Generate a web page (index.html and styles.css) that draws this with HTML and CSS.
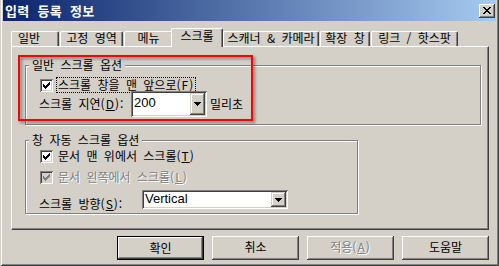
FILE: index.html
```html
<!DOCTYPE html>
<html lang="ko">
<head>
<meta charset="utf-8">
<title>입력 등록 정보</title>
<link rel="stylesheet" href="styles.css">
</head>
<body>
<div class="window">
  <div class="titlebar">
    <span class="title">입력 등록 정보</span>
    <div class="close">
      <svg width="8" height="7" viewBox="0 0 8 7" shape-rendering="crispEdges"><path fill="#000" d="M0 0h2v1h-2zM6 0h2v1h-2zM1 1h2v1h-2zM5 1h2v1h-2zM2 2h4v1h-4zM3 3h2v1h-2zM2 4h4v1h-4zM1 5h2v1h-2zM5 5h2v1h-2zM0 6h2v1h-2zM6 6h2v1h-2z"/></svg>
    </div>
  </div>
  <div class="client">
    <div class="tabs">
      <div class="tab t1">일반</div>
      <div class="tab t2">고정 영역</div>
      <div class="tab t3">메뉴</div>
      <div class="tab t4 selected">스크롤</div>
      <div class="tab t5">스캐너 &amp; 카메라</div>
      <div class="tab t6">확장 창</div>
      <div class="tab t7">링크 / 핫스팟</div>
    </div>
    <div class="panel">
      <div class="group g1">
        <div class="legend">일반 스크롤 옵션</div>
        <div class="row check-row r1">
          <span class="checkbox"><svg width="7" height="7" viewBox="0 0 7 7" shape-rendering="crispEdges"><path fill="#000" d="M6 0h1v1h-1zM5 1h2v1h-2zM0 2h1v1h-1zM4 2h3v1h-3zM0 3h2v1h-2zM3 3h3v1h-3zM0 4h5v1h-5zM1 5h3v1h-3zM2 6h1v1h-1z"/></svg></span>
          <span class="label focus">스크롤 창을 맨 앞으로<span class="acc">(<u>F</u>)</span></span>
        </div>
        <div class="row field-row r2">
          <span class="field-label fl1">스크롤 지연<span class="acc">(<u>D</u>):</span></span>
          <div class="combo c1"><span class="value">200</span><span class="drop"><svg width="7" height="4" viewBox="0 0 7 4" shape-rendering="crispEdges"><path fill="#000" d="M0 0h7v1h-7zM1 1h5v1h-5zM2 2h3v1h-3zM3 3h1v1h-1z"/></svg></span></div>
          <span class="unit">밀리초</span>
        </div>
      </div>
      <div class="group g2">
        <div class="legend">창 자동 스크롤 옵션</div>
        <div class="row check-row r3">
          <span class="checkbox"><svg width="7" height="7" viewBox="0 0 7 7" shape-rendering="crispEdges"><path fill="#000" d="M6 0h1v1h-1zM5 1h2v1h-2zM0 2h1v1h-1zM4 2h3v1h-3zM0 3h2v1h-2zM3 3h3v1h-3zM0 4h5v1h-5zM1 5h3v1h-3zM2 6h1v1h-1z"/></svg></span>
          <span class="label">문서 맨 위에서 스크롤<span class="acc">(<u>T</u>)</span></span>
        </div>
        <div class="row check-row r4">
          <span class="checkbox disabled"><svg width="7" height="7" viewBox="0 0 7 7" shape-rendering="crispEdges"><path fill="#808080" d="M6 0h1v1h-1zM5 1h2v1h-2zM0 2h1v1h-1zM4 2h3v1h-3zM0 3h2v1h-2zM3 3h3v1h-3zM0 4h5v1h-5zM1 5h3v1h-3zM2 6h1v1h-1z"/></svg></span>
          <span class="label disabled-text">문서 왼쪽에서 스크롤<span class="acc">(<u>L</u>)</span></span>
        </div>
        <div class="row field-row r5">
          <span class="field-label fl2">스크롤 방향<span class="acc">(<u>S</u>):</span></span>
          <div class="combo c2"><span class="value">Vertical</span><span class="drop"><svg width="7" height="4" viewBox="0 0 7 4" shape-rendering="crispEdges"><path fill="#000" d="M0 0h7v1h-7zM1 1h5v1h-5zM2 2h3v1h-3zM3 3h1v1h-1z"/></svg></span></div>
        </div>
      </div>
    </div>
    <div class="buttons">
      <div class="btn default">확인</div>
      <div class="btn">취소</div>
      <div class="btn disabled-text">적용<span class="acc">(<u>A</u>)</span></div>
      <div class="btn">도움말</div>
    </div>
  </div>
  <div class="highlight"></div>
</div>
</body>
</html>
```

FILE: styles.css
```css
* { box-sizing: border-box; }
html, body { margin: 0; padding: 0; }
body {
  width: 499px;
  height: 266px;
  overflow: hidden;
  background: #D4D0C8;
  font-family: "Noto Sans CJK KR", "Noto Sans", sans-serif;
  font-size: 12px;
  color: #000;
}
.window {
  position: relative;
  width: 499px;
  height: 266px;
  padding: 0 3px 3px 3px;
  background: #D4D0C8;
  box-shadow: inset 1px 0 #D4D0C8, inset -1px -1px #404040, inset 2px 0 #fff, inset -2px -2px #808080;
  display: flex;
  flex-direction: column;
}
.titlebar {
  height: 21px;
  flex: none;
  display: flex;
  align-items: flex-start;
  padding-left: 2px;
  background: linear-gradient(to right, #0A246A, #A6CAF0);
}
.title {
  color: #fff;
  font-weight: bold;
  font-size: 13px;
  line-height: 14px;
  margin-top: 4px;
  word-spacing: 4px;
  letter-spacing: 0.3px;
}
.close {
  margin-left: auto;
  margin-right: 1px;
  margin-top: 4px;
  width: 16px;
  height: 14px;
  background: #D4D0C8;
  box-shadow: inset -1px -1px #404040, inset 1px 1px #fff, inset -2px -2px #808080;
  padding: 3px 0 0 4px;
  display: flex;
  align-items: flex-start;
}
.close svg { display: block; }
.client {
  flex: 1;
  display: flex;
  flex-direction: column;
  padding-top: 7px;
}
.tabs {
  display: flex;
  align-items: flex-end;
  gap: 1px;
  height: 18px;
  margin-left: 8px;
}
.tab {
  height: 15px;
  border-top: 1px solid #fff;
  border-left: 1px solid #fff;
  border-right: 1px solid #404040;
  border-radius: 2px 2px 0 0;
  box-shadow: inset -1px 0 #808080;
  background: #D4D0C8;
  line-height: 12px;
  text-align: center;
  white-space: nowrap;
  word-spacing: 3px;
}
.t1 { width: 48px; text-align: left; padding-left: 6px; }
.t2 { width: 63px; }
.t3 { width: 49px; }
.t4 { width: 52px; }
.t5 { width: 96px; }
.t6 { width: 50px; }
.t7 { width: 87px; }
.tab.selected {
  position: relative;
  z-index: 1;
  height: 19px;
  margin: 0 -1px -1px -3px;
  line-height: 12px;
  padding-top: 1px;
}
.panel {
  width: 478px;
  height: 184px;
  flex: none;
  margin-left: 8px;
  border-top: 1px solid #fff;
  border-left: 1px solid #fff;
  border-right: 1px solid #404040;
  border-bottom: 1px solid #404040;
  box-shadow: inset -1px -1px #808080;
  padding: 18px 0 0 13px;
  display: flex;
  flex-direction: column;
}
.group {
  border: 1px solid #808080;
  box-shadow: inset 1px 1px #fff, 1px 1px #fff;
  display: flex;
  flex-direction: column;
  padding-left: 13px;
}
.g1 { width: 456px; height: 60px; }
.g2 { width: 333px; height: 74px; margin-top: 15px; }
.legend {
  align-self: flex-start;
  margin: -8px 0 0 -10px;
  padding: 0 3px;
  background: #D4D0C8;
  line-height: 14px;
  word-spacing: 3px;
  white-space: nowrap;
}
.row { display: flex; align-items: flex-start; white-space: nowrap; }
.check-row { height: 16px; }
.r1 { margin-top: 5px; }
.r3 { margin-top: 1px; }
.r4 { margin-top: 5px; }
.checkbox {
  width: 13px;
  height: 13px;
  margin: 2px 0 0 1px;
  background: #fff;
  box-shadow: inset 1px 1px #808080, inset -1px -1px #fff, inset 2px 2px #404040, inset -2px -2px #D4D0C8;
  padding: 3px 0 0 3px;
  flex: none;
}
.checkbox svg { display: block; }
.checkbox.disabled { background: #D4D0C8; }
.label {
  margin-left: 3px;
  height: 16px;
  padding: 0 1px;
  border: 1px solid transparent;
  line-height: 13px;
  word-spacing: 3px;
}
.label.focus { border: 1px dotted #000; width: 140px; }
.acc { letter-spacing: 1px; }
.disabled-text { color: #808080; text-shadow: 1px 1px 0 #fff; }
.r2 { margin-top: -2px; height: 26px; align-items: center; }
.r5 { margin-top: 5px; height: 19px; }
.field-label { line-height: 14px; word-spacing: 3px; flex: none; }
.fl1 { width: 92px; }
.fl2 { width: 103px; margin-top: 7px; }
.combo {
  display: flex;
  background: #fff;
  padding: 2px;
  box-shadow: inset 1px 1px #808080, inset -1px -1px #fff, inset 2px 2px #404040, inset -2px -2px #D4D0C8;
  flex: none;
}
.c1 { width: 76px; height: 26px; }
.c2 { width: 146px; height: 19px; }
.value {
  flex: 1;
  font-family: "Liberation Sans", Arial, sans-serif;
  font-size: 13px;
  padding-left: 1px;
}
.c1 .value { line-height: 20px; }
.c2 .value { line-height: 14px; }
.drop {
  width: 15px;
  height: 100%;
  background: #D4D0C8;
  box-shadow: inset -1px -1px #404040, inset 1px 1px #D4D0C8, inset -2px -2px #808080, inset 2px 2px #fff;
  display: flex;
  align-items: center;
  justify-content: center;
}
.drop svg { display: block; }
.unit { margin-left: 3px; line-height: 14px; }
.buttons {
  display: flex;
  justify-content: flex-end;
  gap: 8px;
  margin-top: 6px;
  padding-right: 7px;
}
.btn {
  width: 87px;
  height: 24px;
  background: #D4D0C8;
  box-shadow: inset -1px -1px #404040, inset 1px 1px #fff, inset -2px -2px #808080;
  text-align: center;
  line-height: 22px;
  word-spacing: 3px;
}
.btn.default {
  border: 1px solid #000;
  line-height: 21px;
}
.highlight {
  position: absolute;
  left: 18px;
  top: 55px;
  width: 235px;
  height: 66px;
  border: 2px solid #f00;
  filter: drop-shadow(2px 2px 1.5px rgba(0, 0, 0, 0.45));
  pointer-events: none;
}
```
